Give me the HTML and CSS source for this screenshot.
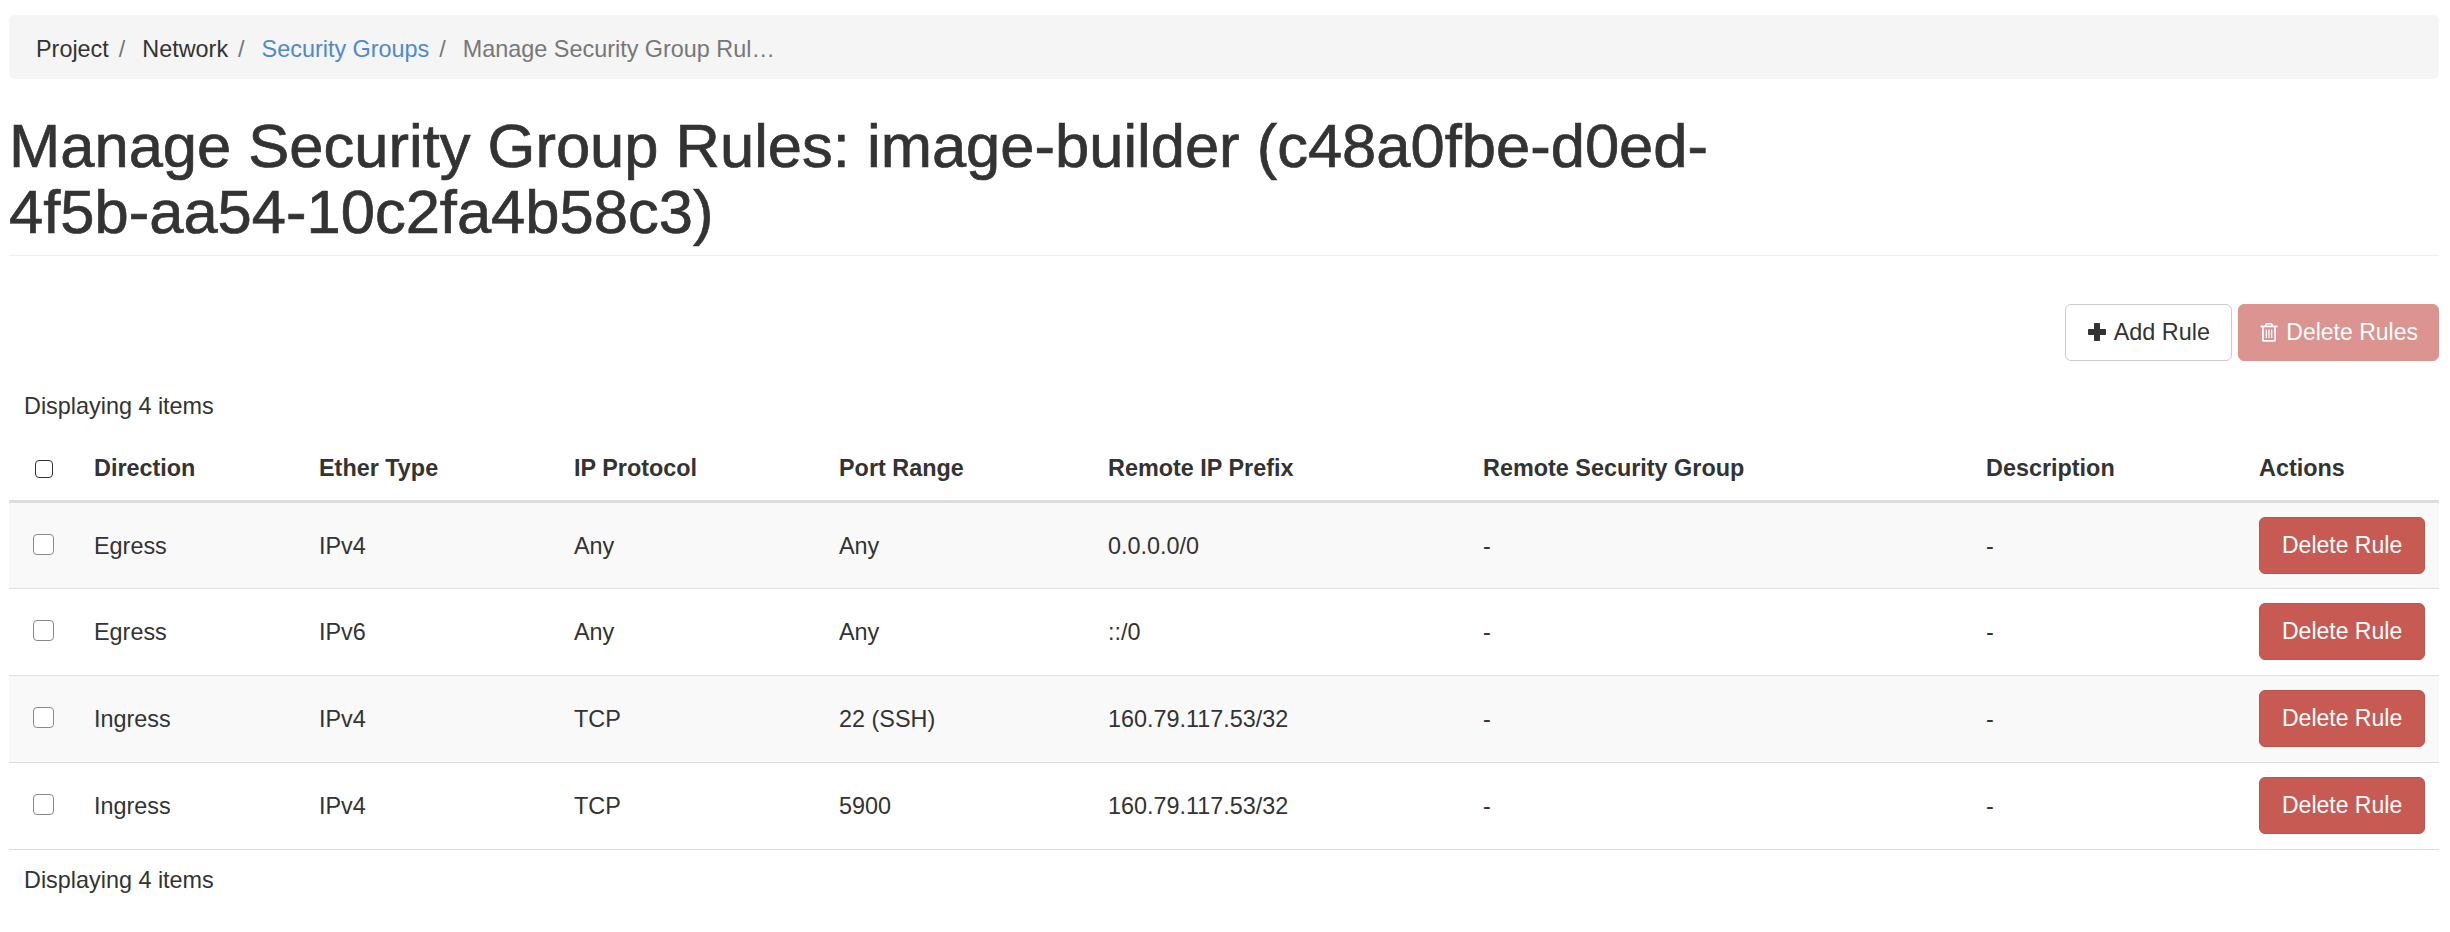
FILE: index.html
```html
<!DOCTYPE html>
<html>
<head>
  <title>Manage Security Group Rules</title>
  <meta charset="UTF-8" />
  <link rel="stylesheet" href="styles.css">
</head>
<body>

  <ol class="breadcrumb">
    <li>Project</li>
    <li>Network</li>
    <li><a href="#">Security Groups</a></li>
    <li class="active">Manage Security Group Rul…</li>
  </ol>

  <div class="page-header">
    <h1>Manage Security Group Rules: image-builder (c48a0fbe-d0ed-4f5b-aa54-10c2fa4b58c3)</h1>
  </div>

  <div class="table-actions">
    <button class="btn btn-default">
      <svg class="icon" viewBox="0 0 20 20"><path d="M7.5 1.500h5v6h6v5h-6v6h-5v-6h-6v-5h6z" stroke="currentColor" stroke-width="1" stroke-linejoin="round"/></svg>
      Add Rule
    </button>
    <button class="btn btn-danger disabled">
      <svg class="icon" viewBox="0 0 20 20"><path fill-rule="evenodd" d="M7 1h6l1.200 2.500H18.500v1.800h-1.500V18a1.800 1.800 0 0 1-1.800 1.800H4.800A1.800 1.800 0 0 1 3 18V5.300H1.500V3.500h4.300zM8 2.400l-.5 1.100h5L12 2.400zM4.800 5.300V18h10.400V5.300zM6.700 7.500h1.300v8.500H6.700zM9.350 7.500h1.300v8.500h-1.300zM12 7.500h1.300v8.500H12z"/></svg>
      Delete Rules
    </button>
  </div>

  <table class="rules">
    <colgroup>
      <col class="col-check"><col class="col-direction"><col class="col-ether"><col class="col-protocol"><col class="col-port">
      <col class="col-prefix"><col class="col-group"><col class="col-desc"><col class="col-actions">
    </colgroup>
    <thead>
      <tr class="meta"><td colspan="9">Displaying 4 items</td></tr>
      <tr class="heads">
        <th class="check"><input type="checkbox" class="head-box"></th>
        <th>Direction</th><th>Ether Type</th><th>IP Protocol</th><th>Port Range</th>
        <th>Remote IP Prefix</th><th>Remote Security Group</th><th>Description</th><th>Actions</th>
      </tr>
    </thead>
    <tbody>
      <tr>
        <td class="check"><input type="checkbox"></td>
        <td>Egress</td><td>IPv4</td><td>Any</td><td>Any</td><td>0.0.0.0/0</td><td>-</td><td>-</td>
        <td class="actions"><button class="btn btn-danger">Delete Rule</button></td>
      </tr>
      <tr>
        <td class="check"><input type="checkbox"></td>
        <td>Egress</td><td>IPv6</td><td>Any</td><td>Any</td><td>::/0</td><td>-</td><td>-</td>
        <td class="actions"><button class="btn btn-danger">Delete Rule</button></td>
      </tr>
      <tr>
        <td class="check"><input type="checkbox"></td>
        <td>Ingress</td><td>IPv4</td><td>TCP</td><td>22 (SSH)</td><td>160.79.117.53/32</td><td>-</td><td>-</td>
        <td class="actions"><button class="btn btn-danger">Delete Rule</button></td>
      </tr>
      <tr>
        <td class="check"><input type="checkbox"></td>
        <td>Ingress</td><td>IPv4</td><td>TCP</td><td>5900</td><td>160.79.117.53/32</td><td>-</td><td>-</td>
        <td class="actions"><button class="btn btn-danger">Delete Rule</button></td>
      </tr>
    </tbody>
    <tfoot>
      <tr class="meta"><td colspan="9">Displaying 4 items</td></tr>
    </tfoot>
  </table>

</body>
</html>
```

FILE: styles.css
```css
* {
  box-sizing: border-box;
}

body {
  margin: 0;
  padding: 15px 11px 0 9px;
  background: #fff;
  font-family: 'Liberation Sans', Arial, sans-serif;
  font-size: 23.4px;
  line-height: 33px;
  color: #333;
}

a {
  color: #4f8ac9;
  text-decoration: none;
}

.breadcrumb {
  display: flex;
  height: 64px;
  margin: 0;
  padding: 18px 27px 0;
  list-style: none;
  background: #f5f5f5;
  border-radius: 6px;
}

.breadcrumb li + li::before {
  content: "/";
  padding: 0 17px 0 10px;
  color: #777;
}

.breadcrumb .active {
  color: #777;
}

.page-header {
  margin-top: 34px;
  padding-bottom: 10px;
  border-bottom: 1px solid #eee;
}

h1 {
  margin: 0;
  max-width: 1760px;
  font-size: 61.5px;
  font-weight: 400;
  line-height: 66px;
  -webkit-text-stroke: 0.7px #333;
}

.table-actions {
  display: flex;
  justify-content: flex-end;
  gap: 6px;
  margin-top: 48px;
}

.btn {
  height: 57px;
  padding: 0 21px;
  font-family: inherit;
  font-size: 23.4px;
  border: 1px solid transparent;
  border-radius: 6px;
}

.btn-default {
  background: #fff;
  border-color: #ccc;
  color: #333;
}

.btn-danger {
  padding: 0 22px;
  font-size: 23px;
  background: #c75b54;
  border-color: #c1534d;
  color: #fff;
}

.btn-danger.disabled {
  padding: 0 20px;
  background: #db9490;
  border-color: #db9490;
}

.icon {
  width: 20px;
  height: 20px;
  margin-right: 1px;
  vertical-align: -2px;
  fill: currentColor;
}

.rules {
  width: 100%;
  margin-top: 14px;
  border-collapse: collapse;
  table-layout: fixed;
}

.col-check { width: 72px; }
.col-direction { width: 225px; }
.col-ether { width: 255px; }
.col-protocol { width: 265px; }
.col-port { width: 269px; }
.col-prefix { width: 375px; }
.col-group { width: 503px; }
.col-desc { width: 273px; }
.col-actions { width: 193px; }

.rules th,
.rules td {
  padding: 2px 13px 0;
  text-align: left;
  vertical-align: middle;
}

.rules .meta td {
  height: 60px;
  padding-left: 15px;
}

.rules .heads th {
  height: 66px;
  font-weight: bold;
  border-bottom: 3px solid #ddd;
}

.rules tbody td {
  height: 87px;
  border-bottom: 1px solid #ddd;
}

.rules tbody tr:nth-child(odd) {
  background: #f9f9f9;
}

.rules .check {
  padding: 2px 0 0 24px;
}

.rules .actions {
  padding-top: 0;
}

input[type=checkbox] {
  display: block;
  appearance: none;
  width: 21px;
  height: 21px;
  margin: 0 0 4px;
  background: #fff;
  border: 1.5px solid #8a8a8a;
  border-radius: 4px;
}

input.head-box[type=checkbox] {
  width: 18px;
  height: 18px;
  margin: 2px 0 0 2px;
  border-color: #333;
}
```
